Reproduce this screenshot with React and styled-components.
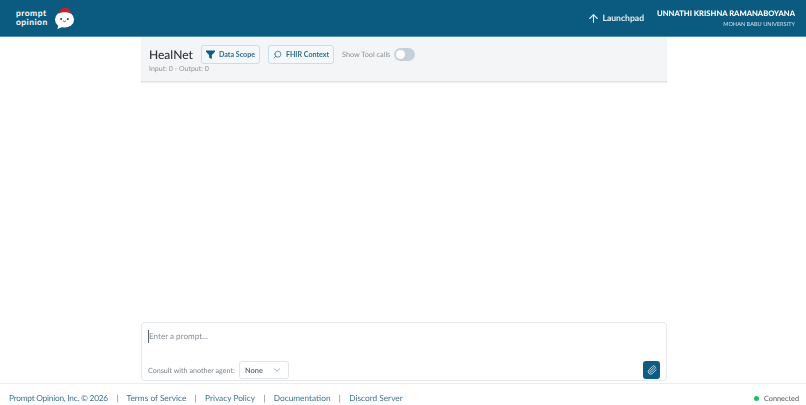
import React from 'react'
import styled, { createGlobalStyle } from 'styled-components'
import { ChevronDown, Paperclip, Search, ArrowUp } from 'lucide-react'

const GlobalStyle = createGlobalStyle`
  html, body {
    margin: 0;
    height: 100%;
    background: #fff;
    font-family: Lato, 'Noto Sans', sans-serif;
    text-rendering: geometricPrecision;
  }
  #root {
    height: 100%;
  }
  * {
    box-sizing: border-box;
  }
`

const Page = styled.div`
  display: flex;
  flex-direction: column;
  height: 405px;
  overflow: hidden;
  opacity: 0.999;
`

const Header = styled.header`
  flex: 0 0 37px;
  display: flex;
  align-items: center;
  justify-content: space-between;
  padding: 0 11px 0 16px;
  background: #0b5a80;
  border-bottom: 1px solid #4f90ad;
  color: #fff;
`

const Brand = styled.div`
  display: flex;
  align-items: center;
  gap: 5px;
`

const BrandName = styled.div`
  width: 33px;
  font-size: 8.5px;
  font-weight: 700;
  line-height: 9.5px;
  letter-spacing: 0.45px;
`

const HeaderRight = styled.div`
  display: flex;
  align-items: center;
  gap: 13px;
`

const Launchpad = styled.a`
  display: flex;
  align-items: center;
  gap: 2px;
  font-size: 8.6px;
  font-weight: 700;
  color: #e6eff4;
`

const Account = styled.div`
  text-align: right;
`

const AccountName = styled.div`
  font-size: 7.6px;
  font-weight: 900;
  line-height: 12px;
`

const AccountOrg = styled.div`
  margin-top: 1px;
  font-size: 5.6px;
  line-height: 9px;
  color: #cfe0e9;
`

const Main = styled.main`
  flex: 1;
  display: flex;
  flex-direction: column;
  justify-content: space-between;
  width: 526px;
  margin: 0 auto 0 141px;
  padding-bottom: 2px;
`

const AgentBar = styled.section`
  height: 45px;
  padding: 8px 8px 0;
  background: #f3f5f7;
  border-bottom: 1px solid #e0e3e6;
  box-shadow: 0 1px 1px #eceef0;
`

const AgentRow = styled.div`
  display: flex;
  align-items: center;
`

const AgentName = styled.h1`
  width: 52px;
  margin: 0;
  font-size: 12px;
  font-weight: 500;
  line-height: 19px;
  color: #2b3138;
`

const ScopeButton = styled.button`
  display: flex;
  align-items: center;
  justify-content: center;
  gap: 4px;
  width: ${({ $width }) => $width}px;
  height: 19px;
  margin-right: 8px;
  padding: 0;
  font: 700 7.1px Lato, sans-serif;
  color: #2f6d8f;
  background: #f5f8fa;
  border: 1px solid #c6dfee;
  border-radius: 3px;
`

const ToggleLabel = styled.span`
  width: 52px;
  font-size: 7.3px;
  white-space: nowrap;
  color: #8b949c;
`

const Toggle = styled.span`
  display: flex;
  align-items: center;
  width: 21px;
  height: 13px;
  padding: 0 2px;
  background: #c4d0dc;
  border-radius: 7px;
`

const ToggleKnob = styled.span`
  width: 9px;
  height: 9px;
  background: #fff;
  border-radius: 50%;
`

const Usage = styled.div`
  font-size: 7px;
  line-height: 10px;
  color: #8d959c;
`

const Composer = styled.section`
  display: flex;
  flex-direction: column;
  justify-content: space-between;
  height: 59px;
  padding: 7px 6px 1px 6px;
  border: 1px solid #e6e9ec;
  border-radius: 3px;
`

const Prompt = styled.div`
  border-left: 1px solid #5c6670;
  font-size: 8.1px;
  line-height: 13px;
  color: #878f97;
`

const ComposerRow = styled.div`
  display: flex;
  align-items: center;
`

const ConsultLabel = styled.span`
  width: 91px;
  font-size: 7.15px;
  white-space: nowrap;
  color: #7d858d;
`

const AgentSelect = styled.div`
  display: flex;
  align-items: center;
  justify-content: space-between;
  width: 50px;
  height: 18px;
  padding: 0 6px 0 5px;
  font-size: 7.4px;
  font-weight: 500;
  color: #4c555e;
  border: 1px solid #e2e5e8;
  border-radius: 3px;
`

const AttachButton = styled.button`
  display: flex;
  align-items: center;
  justify-content: center;
  width: 17px;
  height: 18px;
  margin-left: auto;
  padding: 0;
  background: #0f5c82;
  border: 0;
  border-radius: 3px;
  color: #c9dde8;
`

const Footer = styled.footer`
  flex: 0 0 22px;
  display: flex;
  align-items: center;
  justify-content: space-between;
  padding: 7px 7px 0 9px;
  border-top: 1px solid #eceef0;
  font-size: 8.3px;
`

const FooterLinks = styled.nav`
  display: flex;
  align-items: center;
  gap: 8.3px;
  color: #3f7390;
`

const Copyright = styled.span`
  letter-spacing: -0.24px;
`

const Divider = styled.span`
  color: #5f7f92;
`

const Status = styled.div`
  display: flex;
  align-items: center;
  gap: 5px;
  font-size: 7.3px;
  color: #4f5860;
`

const StatusDot = styled.span`
  width: 5px;
  height: 5px;
  background: #1fc15f;
  border-radius: 50%;
`

const Mascot = () => (
  <svg width="21" height="22" viewBox="0 0 22 23" aria-hidden="true">
    <ellipse cx="11" cy="13" rx="10" ry="8.5" fill="#fff" />
    <path d="M5 18 L3.5 23 L10 20.5 Z" fill="#fff" />
    <path d="M5 7 C6 2 9 0.5 12 0.5 C16 0.5 18 4 17.5 7 C14 5 9 5 5 7 Z" fill="#b9262c" />
    <circle cx="7.5" cy="12.5" r="1" fill="#27323a" />
    <circle cx="14.5" cy="12.5" r="1" fill="#27323a" />
    <path d="M9.5 14.5 Q11 16 12.5 14.5" fill="none" stroke="#27323a" strokeWidth="0.8" />
  </svg>
)

const FunnelIcon = () => (
  <svg width="9" height="9" viewBox="0 0 10 10" aria-hidden="true">
    <path d="M0 0.5 H10 V2 L6.5 5.5 V10 L3.5 8.5 V5.5 L0 2 Z" fill="#0f5c82" />
  </svg>
)

const links = ['Terms of Service', 'Privacy Policy', 'Documentation', 'Discord Server']

export default function App() {
  return (
    <Page>
      <GlobalStyle />
      <Header>
        <Brand>
          <BrandName>
            prompt
            <br />
            opinion
          </BrandName>
          <Mascot />
        </Brand>
        <HeaderRight>
          <Launchpad>
            <ArrowUp size={13} strokeWidth={2} />
            Launchpad
          </Launchpad>
          <Account>
            <AccountName>UNNATHI KRISHNA RAMANABOYANA</AccountName>
            <AccountOrg>MOHAN BABU UNIVERSITY</AccountOrg>
          </Account>
        </HeaderRight>
      </Header>
      <Main>
        <AgentBar>
          <AgentRow>
            <AgentName>HealNet</AgentName>
            <ScopeButton $width={59}>
              <FunnelIcon />
              Data Scope
            </ScopeButton>
            <ScopeButton $width={66}>
              <Search size={9} strokeWidth={2} style={{ transform: 'scaleX(-1)' }} />
              FHIR Context
            </ScopeButton>
            <ToggleLabel>Show Tool calls</ToggleLabel>
            <Toggle>
              <ToggleKnob />
            </Toggle>
          </AgentRow>
          <Usage>Input: 0 - Output: 0</Usage>
        </AgentBar>
        <Composer>
          <Prompt>Enter a prompt...</Prompt>
          <ComposerRow>
            <ConsultLabel>Consult with another agent:</ConsultLabel>
            <AgentSelect>
              None
              <ChevronDown size={10} strokeWidth={1.5} color="#6b747c" />
            </AgentSelect>
            <AttachButton>
              <Paperclip size={10} strokeWidth={2.2} />
            </AttachButton>
          </ComposerRow>
        </Composer>
      </Main>
      <Footer>
        <FooterLinks>
          <Copyright>Prompt Opinion, Inc. © 2026</Copyright>
          {links.map((link) => (
            <React.Fragment key={link}>
              <Divider>|</Divider>
              <span>{link}</span>
            </React.Fragment>
          ))}
        </FooterLinks>
        <Status>
          <StatusDot />
          Connected
        </Status>
      </Footer>
    </Page>
  )
}
